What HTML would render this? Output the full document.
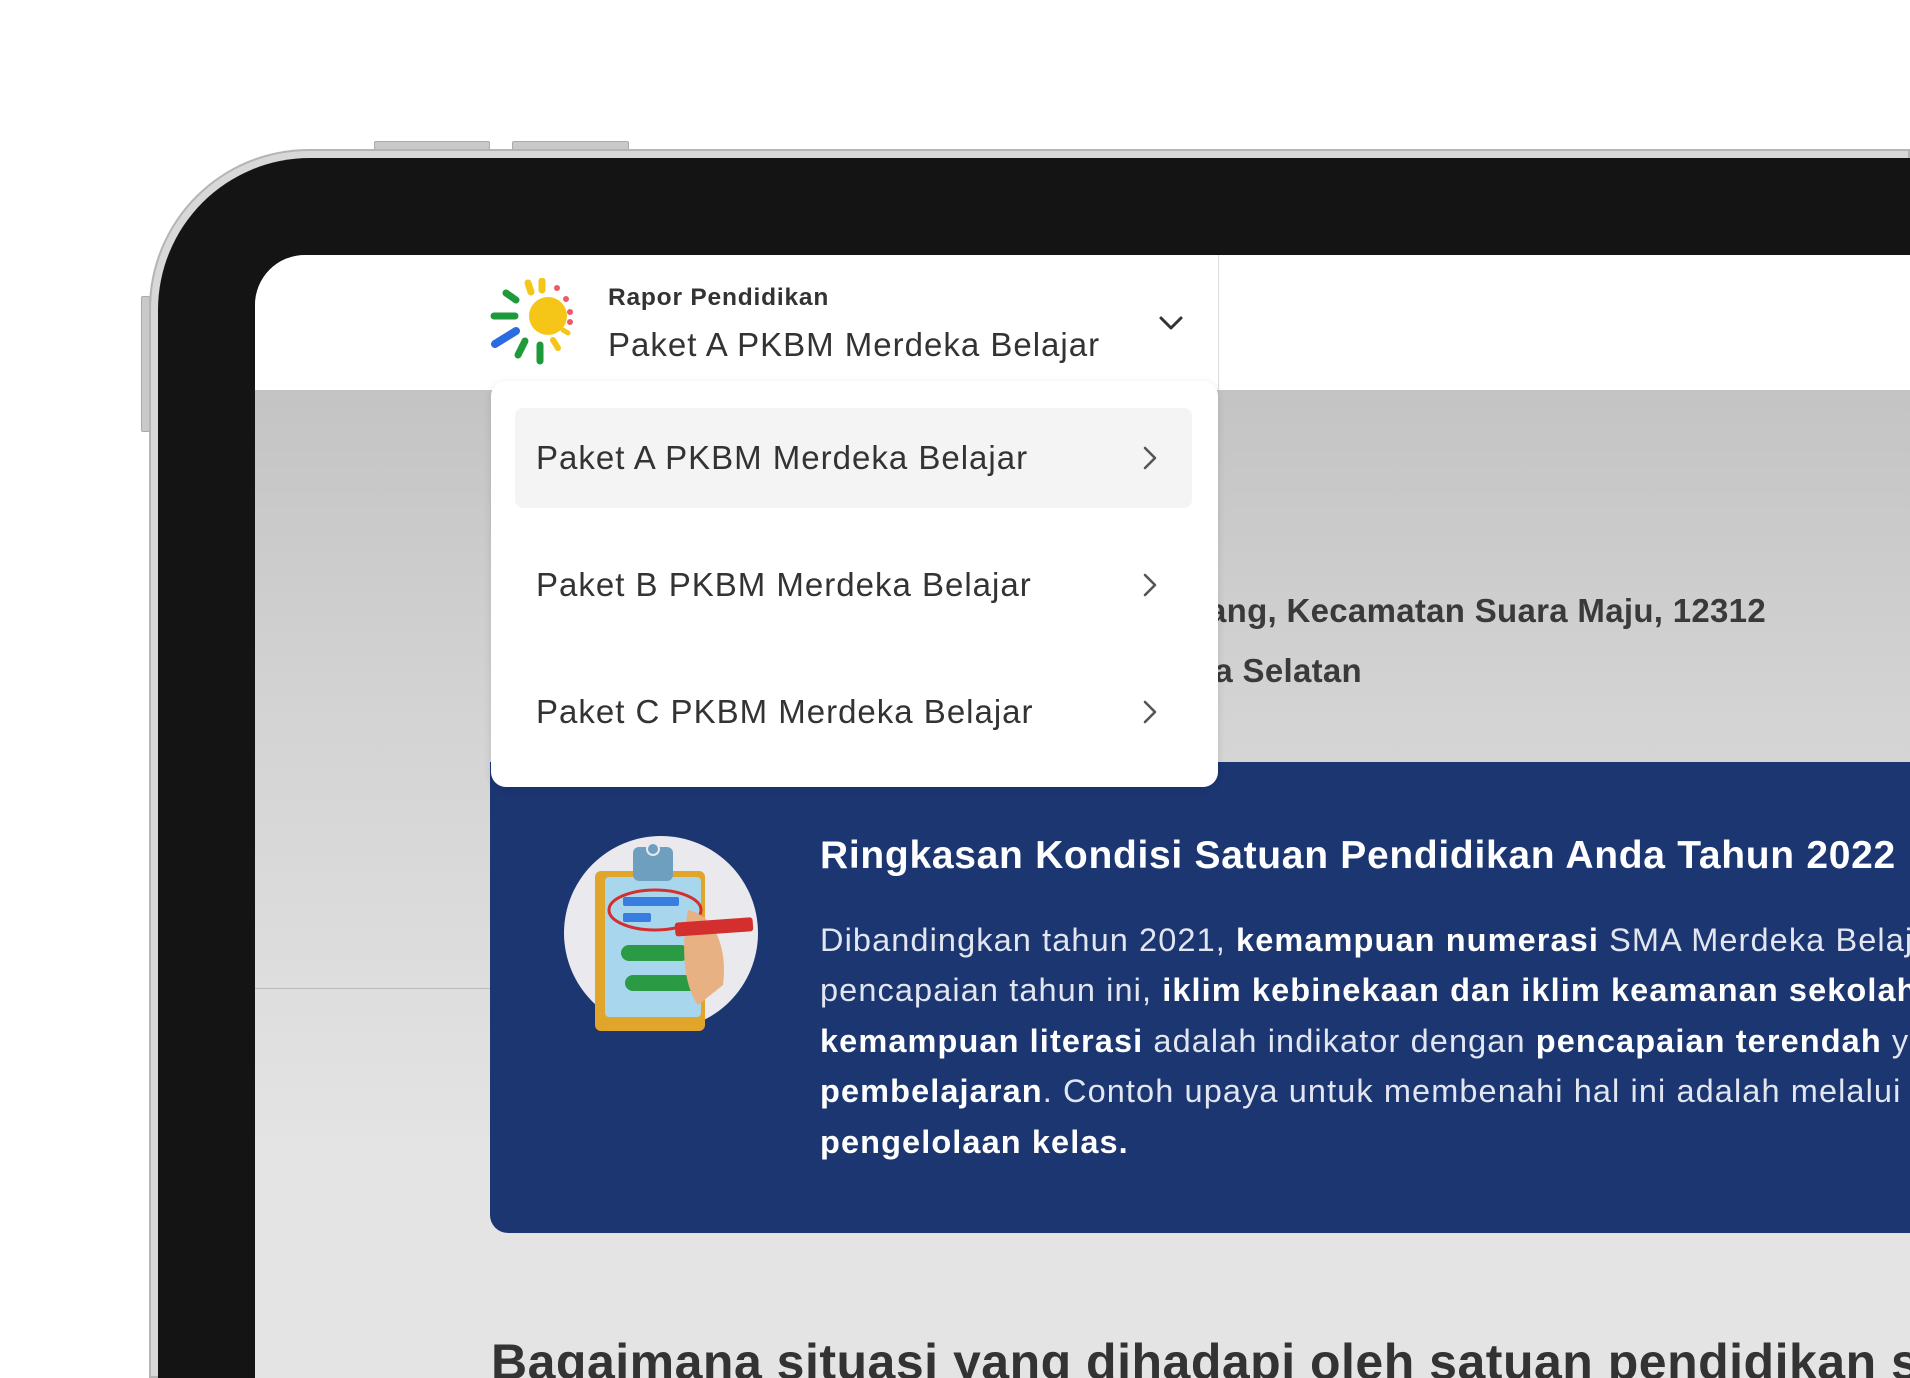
<!DOCTYPE html>
<html><head><meta charset="utf-8">
<style>
*{margin:0;padding:0;box-sizing:border-box}
html,body{width:1910px;height:1378px;overflow:hidden;background:#fff;font-family:"Liberation Sans",sans-serif}
#wrap{position:relative;width:1910px;height:1378px;overflow:hidden}
.btn{position:absolute;background:#c9c9c9;border:1px solid #aaa;border-radius:2px}
.frame{position:absolute;left:149px;top:149px;width:1761px;height:1229px;border-radius:160px 0 0 0;background:#d8d8d8;box-shadow:inset 0 0 0 2px #b5b5b5}
.bezel{position:absolute;left:158px;top:158px;width:1752px;height:1220px;border-radius:152px 0 0 0;background:#141414}
.screen{position:absolute;left:255px;top:255px;width:1655px;height:1123px;border-radius:50px 0 0 0;overflow:hidden;background:linear-gradient(#bdbdbd 0px,#d3d3d3 450px,#e4e4e4 900px)}
.header{position:absolute;left:0;top:0;width:100%;height:135px;background:#fff}
.vline{position:absolute;left:963px;top:0;width:1px;height:135px;background:#ddd}
.hline{position:absolute;left:0;top:733px;width:235px;height:1px;background:#bbb}
.t{position:absolute;white-space:nowrap}
.drop{position:absolute;left:236px;top:126px;width:727px;height:406px;background:#fff;border-radius:15px;box-shadow:0 2px 8px rgba(0,0,0,.12)}
.item{position:absolute;left:24px;width:677px;height:100px;border-radius:8px}
.item span{position:absolute;left:21px;top:50%;transform:translateY(-50%);font-size:33px;color:#333;letter-spacing:1px}
.item svg{position:absolute;right:34px;top:50%;margin-top:-13px}
.card{position:absolute;left:235px;top:507px;width:1420px;height:471px;background:#1c3672;border-radius:0 0 0 18px;overflow:hidden}
.p{font-size:32.5px;color:#e2e6f0;letter-spacing:1.1px}
.p b{color:#fff}
</style></head><body><div id="wrap">
<div class="btn" style="left:374px;top:141px;width:116px;height:9px"></div>
<div class="btn" style="left:512px;top:141px;width:117px;height:9px"></div>
<div class="btn" style="left:141px;top:296px;width:9px;height:136px"></div>
<div class="frame"></div>
<div class="bezel"></div>
<div class="screen">
  <div class="header"></div>
  <div class="vline"></div>
  <div class="hline"></div>
  <svg style="position:absolute;left:235px;top:23px" width="94" height="90" viewBox="0 0 94 90">
    <g stroke-linecap="round" stroke-width="7">
      <line x1="38" y1="5" x2="41" y2="14" stroke="#f5c518"/>
      <line x1="52" y1="3" x2="52" y2="12" stroke="#f5c518"/>
      <line x1="16" y1="15" x2="26" y2="22" stroke="#1e9a3a"/>
      <line x1="4" y1="38" x2="25" y2="38" stroke="#1e9a3a"/>
      <line x1="5" y1="66" x2="26" y2="53" stroke="#2b6be0" stroke-width="8"/>
      <line x1="28" y1="77" x2="35" y2="63" stroke="#1e9a3a"/>
      <line x1="50" y1="83" x2="50" y2="67" stroke="#1e9a3a"/>
      <line x1="68" y1="70" x2="63" y2="62" stroke="#f5c518" stroke-width="6"/>
      <line x1="78" y1="55" x2="73" y2="52" stroke="#f5c518" stroke-width="5"/>
    </g>
    <g fill="#ef5a6b"><circle cx="67" cy="10" r="3"/><circle cx="76" cy="21" r="3"/><circle cx="80" cy="34" r="3"/><circle cx="80" cy="44" r="3"/></g>
    <circle cx="58" cy="38" r="19" fill="#f5c518"/>
    <path d="M63 20 A19 19 0 0 1 54 57 A16 16 0 0 0 63 20Z" fill="#e6a12a"/>
  </svg>
  <div class="t" style="left:353px;top:29px;font-size:24.5px;font-weight:bold;color:#333;letter-spacing:.8px">Rapor Pendidikan</div>
  <div class="t" style="left:353px;top:71px;font-size:33px;color:#333;letter-spacing:1px">Paket A PKBM Merdeka Belajar</div>
  <svg style="position:absolute;left:903px;top:60px" width="26" height="16" viewBox="0 0 26 16"><path d="M3 3 L13 13 L23 3" fill="none" stroke="#333" stroke-width="3" stroke-linecap="round" stroke-linejoin="round"/></svg>

  <div class="t" style="left:111px;width:1400px;text-align:right;top:337px;font-size:33px;font-weight:bold;color:#3a3a3a;letter-spacing:.3px">Jalan Pendidikan No. 1, Desa Sukamulang, Kecamatan Suara Maju, 12312</div>
  <div class="t" style="left:307px;width:800px;text-align:right;top:397px;font-size:33px;font-weight:bold;color:#3a3a3a;letter-spacing:.3px">Kota Jakarta Selatan</div>

  <div class="card">
    <svg style="position:absolute;left:73px;top:73px" width="200" height="200" viewBox="0 0 200 200">
      <ellipse cx="98" cy="98" rx="97" ry="97" fill="#e9e9ee"/>
      <rect x="32" y="36" width="110" height="160" rx="6" fill="#e0a52a"/>
      <rect x="42" y="42" width="96" height="140" rx="4" fill="#a8d6ec"/>
      <rect x="70" y="12" width="40" height="34" rx="6" fill="#6f9fbf"/>
      <circle cx="90" cy="14" r="6" fill="#6f9fbf" stroke="#e9e9ee" stroke-width="2"/>
      <ellipse cx="92" cy="75" rx="46" ry="20" fill="none" stroke="#d32f2f" stroke-width="3"/>
      <rect x="60" y="62" width="56" height="9" rx="2" fill="#3a7de0"/>
      <rect x="60" y="78" width="28" height="9" rx="2" fill="#3a7de0"/>
      <rect x="58" y="110" width="68" height="16" rx="8" fill="#2a9a45"/>
      <rect x="62" y="140" width="74" height="16" rx="8" fill="#2a9a45"/>
      <path d="M125 75 C150 80 165 110 160 150 L135 170 C120 150 118 110 125 75Z" fill="#e8b183"/>
      <rect x="112" y="85" width="78" height="14" rx="3" fill="#d32f2f" transform="rotate(-4 150 92)"/>
    </svg>
    <div class="t" style="left:330px;top:72px;font-size:39px;font-weight:bold;color:#fff;letter-spacing:.7px">Ringkasan Kondisi Satuan Pendidikan Anda Tahun 2022</div>
    <div class="t p" style="left:330px;top:160px">Dibandingkan tahun 2021, <b>kemampuan numerasi</b> SMA Merdeka Belajar mengalami peningkatan</div>
    <div class="t p" style="left:330px;top:210px">pencapaian tahun ini, <b>iklim kebinekaan dan iklim keamanan sekolah</b> masih perlu</div>
    <div class="t p" style="left:330px;top:261px"><b>kemampuan literasi</b> adalah indikator dengan <b>pencapaian terendah</b> yang perlu</div>
    <div class="t p" style="left:330px;top:311px"><b>pembelajaran</b>. Contoh upaya untuk membenahi hal ini adalah melalui</div>
    <div class="t p" style="left:330px;top:362px"><b>pengelolaan kelas.</b></div>
  </div>

  <div class="t" style="left:236px;top:1078px;font-size:50px;font-weight:bold;color:#333;letter-spacing:.5px;width:1419px;overflow:hidden">Bagaimana situasi yang dihadapi oleh satuan pendidikan saat ini?</div>

  <div class="drop">
    <div class="item" style="top:27px;background:#f4f4f4"><span>Paket A PKBM Merdeka Belajar</span><svg width="16" height="26" viewBox="0 0 16 26"><path d="M3 3 L13 13 L3 23" fill="none" stroke="#555" stroke-width="2.6" stroke-linecap="round" stroke-linejoin="round"/></svg></div>
    <div class="item" style="top:154px"><span>Paket B PKBM Merdeka Belajar</span><svg width="16" height="26" viewBox="0 0 16 26"><path d="M3 3 L13 13 L3 23" fill="none" stroke="#555" stroke-width="2.6" stroke-linecap="round" stroke-linejoin="round"/></svg></div>
    <div class="item" style="top:281px"><span>Paket C PKBM Merdeka Belajar</span><svg width="16" height="26" viewBox="0 0 16 26"><path d="M3 3 L13 13 L3 23" fill="none" stroke="#555" stroke-width="2.6" stroke-linecap="round" stroke-linejoin="round"/></svg></div>
  </div>
</div>
</div></body></html>
